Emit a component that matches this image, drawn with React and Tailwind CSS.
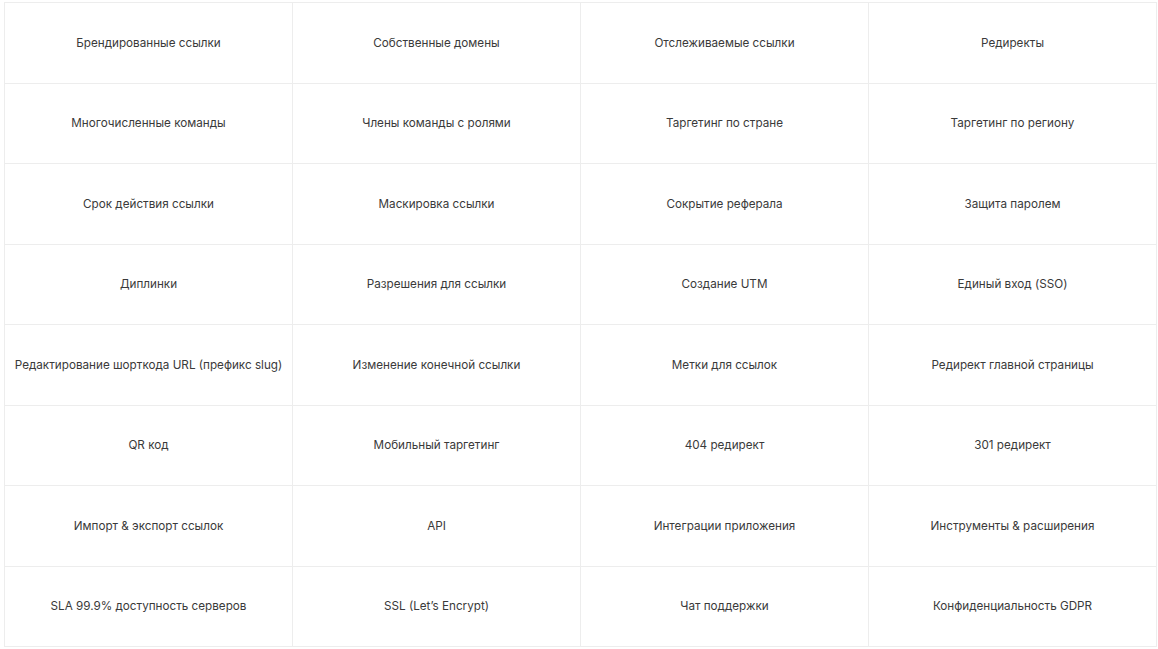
const FEATURES = [
  'Брендированные ссылки', 'Собственные домены', 'Отслеживаемые ссылки', 'Редиректы',
  'Многочисленные команды', 'Члены команды с ролями', 'Таргетинг по стране', 'Таргетинг по региону',
  'Срок действия ссылки', 'Маскировка ссылки', 'Сокрытие реферала', 'Защита паролем',
  'Диплинки', 'Разрешения для ссылки', 'Создание UTM', 'Единый вход (SSO)',
  'Редактирование шорткода URL (префикс slug)', 'Изменение конечной ссылки', 'Метки для ссылок', 'Редирект главной страницы',
  'QR код', 'Мобильный таргетинг', '404 редирект', '301 редирект',
  'Импорт & экспорт ссылок', 'API', 'Интеграции приложения', 'Инструменты & расширения',
  'SLA 99.9% доступность серверов', 'SSL (Let’s Encrypt)', 'Чат поддержки', 'Конфиденциальность GDPR',
]

export default function App() {
  return (
    <div className="w-[1158px] h-[649px] bg-white pl-[4px] pt-[2px]">
      <div
        className="grid grid-cols-4 grid-rows-8 w-[1153px] h-[645px] border-t border-l border-[#ededed]"
        style={{ fontFamily: 'Inter, "Noto Sans", sans-serif' }}
      >
        {FEATURES.map((f, i) => (
          <div
            key={i}
            className="flex items-center justify-center text-center pt-[2px] border-r border-b border-[#ededed] text-[11.7px] text-[#3a3a3a]"
          >
            {f}
          </div>
        ))}
      </div>
    </div>
  )
}
